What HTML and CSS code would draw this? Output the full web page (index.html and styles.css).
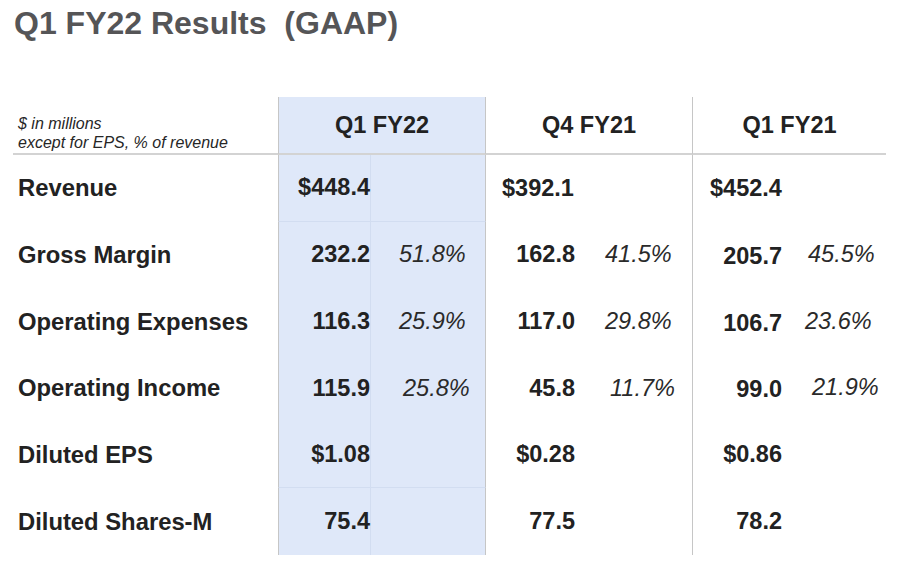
FILE: index.html
```html
<!DOCTYPE html>
<html lang="en">
<head>
<meta charset="utf-8">
<title>Q1 FY22 Results (GAAP)</title>
<link rel="stylesheet" href="styles.css">
</head>
<body>
<h1 class="title">Q1 FY22 Results&nbsp; (GAAP)</h1>
<div class="table">
  <div class="hcell note"><span>$ in millions</span><span>except for EPS, % of revenue</span></div>
  <div class="hcell period blue col1">Q1 FY22</div>
  <div class="hcell period col2">Q4 FY21</div>
  <div class="hcell period col3">Q1 FY21</div>

  <div class="lbl">Revenue</div>
  <div class="num blue col1 bsep">$448.4</div>
  <div class="pct blue bsep"></div>
  <div class="num col2 lead">$392.1</div>
  <div class="pct"></div>
  <div class="num col3 lead">$452.4</div>
  <div class="pct"></div>

  <div class="lbl">Gross Margin</div>
  <div class="num blue col1">232.2</div>
  <div class="pct blue p1">51.8%</div>
  <div class="num col2">162.8</div>
  <div class="pct p2">41.5%</div>
  <div class="num col3 low">205.7</div>
  <div class="pct p3">45.5%</div>

  <div class="lbl">Operating Expenses</div>
  <div class="num blue col1">116.3</div>
  <div class="pct blue p1">25.9%</div>
  <div class="num col2">117.0</div>
  <div class="pct p2">29.8%</div>
  <div class="num col3 low">106.7</div>
  <div class="pct p3 nudge-l">23.6%</div>

  <div class="lbl">Operating Income</div>
  <div class="num blue col1">115.9</div>
  <div class="pct blue p1 nudge-r">25.8%</div>
  <div class="num col2">45.8</div>
  <div class="pct p2 nudge-r">11.7%</div>
  <div class="num col3 low">99.0</div>
  <div class="pct p3 nudge-r">21.9%</div>

  <div class="lbl">Diluted EPS</div>
  <div class="num blue col1 bsep">$1.08</div>
  <div class="pct blue bsep"></div>
  <div class="num col2">$0.28</div>
  <div class="pct"></div>
  <div class="num col3">$0.86</div>
  <div class="pct"></div>

  <div class="lbl">Diluted Shares-M</div>
  <div class="num blue col1">75.4</div>
  <div class="pct blue"></div>
  <div class="num col2">77.5</div>
  <div class="pct"></div>
  <div class="num col3">78.2</div>
  <div class="pct"></div>
</div>
</body>
</html>
```

FILE: styles.css
```css
* {
  box-sizing: border-box;
}

html, body {
  margin: 0;
  padding: 0;
  background: #ffffff;
}

body {
  font-family: "Liberation Sans", Arial, sans-serif;
  color: #222222;
  width: 909px;
  height: 564px;
  overflow: hidden;
}

.title {
  margin: 0;
  padding: 5px 0 0 14px;
  font-size: 32px;
  line-height: 36px;
  font-weight: bold;
  color: #555557;
  white-space: nowrap;
}

.table {
  margin: 56px 0 0 13px;
  display: grid;
  grid-template-columns: 265px 93px 115px 89px 117px 90px 104px;
  grid-template-rows: 58px repeat(6, 66.67px);
  width: 873px;
}

.hcell {
  border-bottom: 2px solid #d3d3d3;
}

.note {
  display: flex;
  flex-direction: column;
  justify-content: flex-end;
  padding: 0 0 1px 5px;
  font-size: 16px;
  line-height: 19px;
  font-style: italic;
  color: #262626;
}

.period {
  grid-column: span 2;
  display: flex;
  align-items: center;
  justify-content: center;
  font-size: 23.5px;
  font-weight: bold;
  color: #222222;
}

.col1 {
  border-left: 1px solid #c6c6c6;
}

.col2,
.col3 {
  border-left: 1px solid #c6c6c6;
}

.period.col1 {
  border-right: 1px solid #c6c6c6;
}

.period.col2 {
  border-left: none;
}

.blue {
  background: #dfe8f9;
}

.lbl {
  display: flex;
  align-items: center;
  padding-left: 5px;
  font-size: 23.8px;
  font-weight: bold;
  color: #222222;
  white-space: nowrap;
}

.num {
  display: flex;
  align-items: center;
  justify-content: flex-end;
  font-size: 23.5px;
  font-weight: bold;
  color: #222222;
  white-space: nowrap;
}

.num.col1 {
  border-right: 1px solid #d2ddf1;
}

.num.col2 {
  border-left: none;
}

.pct.blue {
  border-right: 1px solid #c6c6c6;
}

.num.lead {
  justify-content: flex-start;
}

.num.col2.lead {
  padding-left: 16px;
}

.num.col3.lead {
  padding-left: 17px;
}

.num.low {
  padding-top: 3px;
}

.pct {
  display: flex;
  align-items: center;
  font-size: 23.5px;
  font-style: italic;
  color: #2a2a2a;
  white-space: nowrap;
}

.p1 {
  padding-left: 28px;
}

.p2 {
  padding-left: 30px;
}

.p3 {
  padding-left: 26px;
  padding-bottom: 1px;
}

.p1.nudge-r {
  padding-left: 32px;
}

.p2.nudge-r {
  padding-left: 35px;
}

.p3.nudge-r {
  padding-left: 30px;
}

.p3.nudge-l {
  padding-left: 23px;
}

.bsep {
  border-bottom: 1px solid #d2ddf1;
}
```
